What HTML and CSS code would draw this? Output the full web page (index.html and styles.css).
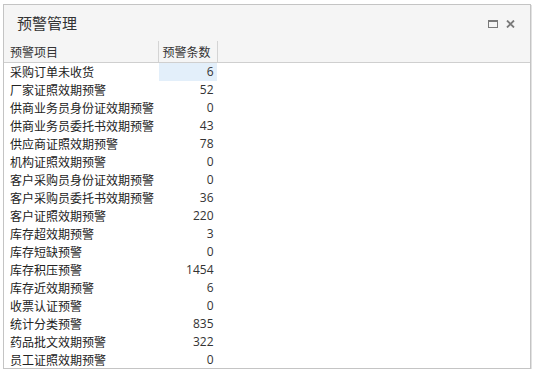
FILE: index.html
```html
<!DOCTYPE html>
<html lang="zh-CN">
<head>
  <meta charset="UTF-8" />
  <title>预警管理</title>
  <link rel="stylesheet" href="styles.css">
</head>
<body>

  <div class="panel">
    <div class="panel-header">
      <span class="panel-title">预警管理</span>
      <div class="panel-tools">
        <svg class="tool" width="10" height="8" viewBox="0 0 10 8">
          <rect x="0.5" y="0.5" width="9" height="7" fill="none" stroke="#7a7a7a" stroke-width="1"/>
          <rect x="0" y="0" width="10" height="2" fill="#7a7a7a"/>
        </svg>
        <svg class="tool" width="9" height="8" viewBox="0 0 9 8">
          <path d="M1 0.5 L8 7.5 M8 0.5 L1 7.5" stroke="#7a7a7a" stroke-width="1.8"/>
        </svg>
      </div>
    </div>

    <div class="grid">
      <table>
        <thead>
          <tr>
            <th class="col-name">预警项目</th>
            <th class="col-num">预警条数</th>
            <th class="col-fill"></th>
          </tr>
        </thead>
        <tbody>
          <tr><td class="col-name">采购订单未收货</td><td class="col-num selected">6</td><td></td></tr>
          <tr><td class="col-name">厂家证照效期预警</td><td class="col-num">52</td><td></td></tr>
          <tr><td class="col-name">供商业务员身份证效期预警</td><td class="col-num">0</td><td></td></tr>
          <tr><td class="col-name">供商业务员委托书效期预警</td><td class="col-num">43</td><td></td></tr>
          <tr><td class="col-name">供应商证照效期预警</td><td class="col-num">78</td><td></td></tr>
          <tr><td class="col-name">机构证照效期预警</td><td class="col-num">0</td><td></td></tr>
          <tr><td class="col-name">客户采购员身份证效期预警</td><td class="col-num">0</td><td></td></tr>
          <tr><td class="col-name">客户采购员委托书效期预警</td><td class="col-num">36</td><td></td></tr>
          <tr><td class="col-name">客户证照效期预警</td><td class="col-num">220</td><td></td></tr>
          <tr><td class="col-name">库存超效期预警</td><td class="col-num">3</td><td></td></tr>
          <tr><td class="col-name">库存短缺预警</td><td class="col-num">0</td><td></td></tr>
          <tr><td class="col-name">库存积压预警</td><td class="col-num">1454</td><td></td></tr>
          <tr><td class="col-name">库存近效期预警</td><td class="col-num">6</td><td></td></tr>
          <tr><td class="col-name">收票认证预警</td><td class="col-num">0</td><td></td></tr>
          <tr><td class="col-name">统计分类预警</td><td class="col-num">835</td><td></td></tr>
          <tr><td class="col-name">药品批文效期预警</td><td class="col-num">322</td><td></td></tr>
          <tr><td class="col-name">员工证照效期预警</td><td class="col-num">0</td><td></td></tr>
        </tbody>
      </table>
    </div>
  </div>

</body>
</html>
```

FILE: styles.css
```css
* {
  box-sizing: border-box;
}

body {
  margin: 0;
  padding: 4px 3px 0 3px;
  background: #ffffff;
  font-family: "Segoe UI", "Open Sans", "Noto Sans CJK SC", sans-serif;
  color: #333;
}

.panel {
  width: 528px;
  height: 365px;
  border: 1px solid #c4c4c4;
  box-shadow: 1px 1px 0 #e2e2e2;
  background: #f5f5f5;
  display: flex;
  flex-direction: column;
  overflow: hidden;
}

.panel-header {
  height: 36px;
  flex: none;
  display: flex;
  align-items: center;
  justify-content: space-between;
  padding: 0 15px 2px 13px;
}

.panel-title {
  font-family: "Noto Sans CJK SC", sans-serif;
  font-size: 15px;
  color: #333;
}

.panel-tools {
  display: flex;
  align-items: center;
  gap: 8px;
  margin-top: 3px;
}

.tool {
  display: block;
}

.grid {
  flex: 1;
  background: #ffffff;
}

table {
  border-collapse: collapse;
  table-layout: fixed;
  width: 100%;
}

th, td {
  padding: 0;
  font-size: 12px;
  font-weight: normal;
  white-space: nowrap;
  overflow: hidden;
}

th {
  height: 21px;
  background: #f5f5f5;
  border-bottom: 1px solid #cfcfcf;
  border-right: 1px solid #d4d4d4;
  text-align: left;
  font-family: "Noto Sans CJK SC", sans-serif;
  color: #333;
  padding-left: 6px;
}

th.col-name {
  width: 154px;
}

th.col-num {
  width: 59px;
  padding-left: 4px;
}

th.col-fill {
  border-right: none;
}

td {
  height: 18px;
  line-height: 18px;
  border-right: 1px solid transparent;
}

td.col-name {
  padding-left: 6px;
  font-family: "Noto Sans CJK SC", sans-serif;
  color: #222;
}

td.col-num {
  text-align: right;
  padding-right: 3px;
  color: #333;
}

td.selected {
  background: #e3effa;
}
```
